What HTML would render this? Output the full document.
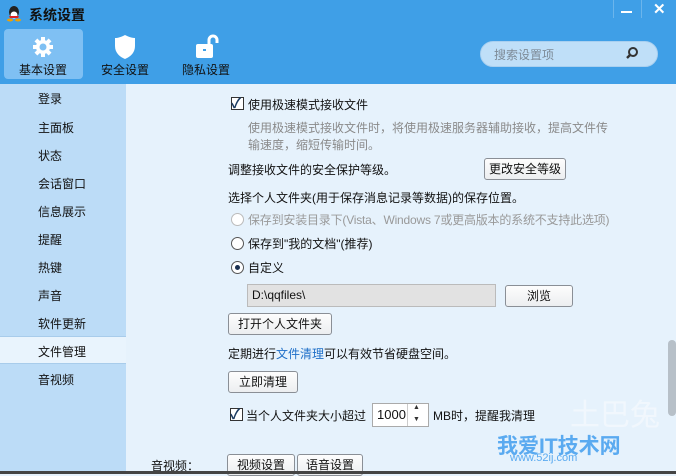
<!DOCTYPE html><html><head><meta charset="utf-8"><style>
*{margin:0;padding:0;box-sizing:border-box}
body{width:676px;height:474px;overflow:hidden;position:relative;background:#e6f2fc;font-family:"Liberation Sans","Noto Sans CJK SC",sans-serif;font-size:12px;color:#111}
.a{position:absolute;white-space:nowrap}
.hdr{left:0;top:0;width:676px;height:84px;background:#3f9fe7}
.side{left:0;top:84px;width:126px;height:390px;background:#bcdcf7}
.si{left:38px}
.btn{position:absolute;border:1px solid #8a8f96;border-radius:3px;background:linear-gradient(#fdfdfd,#eceef0);text-align:center;line-height:20px;height:22px}
.cb{position:absolute;width:13px;height:13px;border:1px solid #333;background:#fff}
.rd{position:absolute;width:13px;height:13px;border:1px solid #555;border-radius:50%;background:#fff}
.g{color:#8a8a8a}
</style></head><body>
<div class="a hdr"></div>
<svg class="a" style="left:6px;top:5px" width="16" height="17" viewBox="0 0 16 17"><ellipse cx="8" cy="7" rx="5" ry="6" fill="#222"/><ellipse cx="8" cy="10" rx="3.5" ry="3.5" fill="#fff"/><path d="M3 11h10l-1 2H4z" fill="#e02020"/><ellipse cx="4" cy="15" rx="3" ry="1.5" fill="#f0a000"/><ellipse cx="12" cy="15" rx="3" ry="1.5" fill="#f0a000"/></svg>
<div class="a" style="left:29px;top:5px;font-size:14px;font-weight:bold;color:#111">系统设置</div>
<div class="a" style="left:613px;top:0;width:1px;height:18px;background:#6bb5ec"></div>
<div class="a" style="left:641px;top:0;width:1px;height:18px;background:#6bb5ec"></div>
<div class="a" style="left:621px;top:11px;width:11px;height:2px;background:#fff"></div>
<div class="a" style="left:653px;top:0px;color:#fff;font-size:15px;font-weight:bold">✕</div>
<div class="a" style="left:4px;top:29px;width:79px;height:50px;background:#7fc0f3;border-radius:4px"></div>
<svg class="a" style="left:32px;top:36px" width="22" height="22" viewBox="0 0 22 22"><g fill="#fff"><circle cx="11" cy="11" r="7"/><rect x="9" y="1" width="4" height="20"/><rect x="1" y="9" width="20" height="4"/><rect x="9" y="1" width="4" height="20" transform="rotate(45 11 11)"/><rect x="9" y="1" width="4" height="20" transform="rotate(-45 11 11)"/></g><circle cx="11" cy="11" r="3.5" fill="#7fc0f3"/></svg>
<svg class="a" style="left:114px;top:34px" width="22" height="26" viewBox="0 0 22 26"><path d="M11 1C7 3 4 4 1 4v8c0 7 5 11 10 13 5-2 10-6 10-13V4c-3 0-6-1-10-3z" fill="#fff"/></svg>
<svg class="a" style="left:195px;top:34px" width="26" height="26" viewBox="0 0 26 26"><rect x="1" y="10" width="17" height="14" rx="2" fill="#fff"/><path d="M14 10V6a4 4 0 0 1 8 0v3" stroke="#fff" stroke-width="3" fill="none"/><rect x="8" y="15" width="3" height="2" fill="#3f9fe7"/></svg>
<div class="a" style="left:19px;top:61px;color:#111">基本设置</div>
<div class="a" style="left:101px;top:61px;color:#111">安全设置</div>
<div class="a" style="left:182px;top:61px;color:#111">隐私设置</div>
<div class="a" style="left:480px;top:41px;width:178px;height:26px;border-radius:13px;background:#bfdff8;border:1px solid #a9d0f0"></div>
<div class="a" style="left:494px;top:46px;color:#7d8a96">搜索设置项</div>
<svg class="a" style="left:625px;top:46px" width="14" height="14" viewBox="0 0 14 14"><circle cx="8" cy="6" r="4" stroke="#333" stroke-width="2" fill="none"/><path d="M5 9l-3 3" stroke="#333" stroke-width="2.4"/></svg>
<div class="a side"></div>
<div class="a" style="left:0;top:336px;width:126px;height:28px;background:#e9f4fd;border-top:1px solid #a8cceb;border-bottom:1px solid #a8cceb"></div>
<div class="a si" style="top:90px">登录</div>
<div class="a si" style="top:119px">主面板</div>
<div class="a si" style="top:147px">状态</div>
<div class="a si" style="top:175px">会话窗口</div>
<div class="a si" style="top:203px">信息展示</div>
<div class="a si" style="top:231px">提醒</div>
<div class="a si" style="top:259px">热键</div>
<div class="a si" style="top:287px">声音</div>
<div class="a si" style="top:315px">软件更新</div>
<div class="a si" style="top:343px">文件管理</div>
<div class="a si" style="top:371px">音视频</div>
<div class="cb" style="left:231px;top:97px"></div><div class="a" style="left:231px;top:93px;font-size:14px;color:#1a3a60;font-weight:bold">✓</div>
<div class="a" style="left:248px;top:96px">使用极速模式接收文件</div>
<div class="a g" style="left:248px;top:119px">使用极速模式接收文件时，将使用极速服务器辅助接收，提高文件传</div>
<div class="a g" style="left:248px;top:136px">输速度，缩短传输时间。</div>
<div class="a" style="left:228px;top:161px">调整接收文件的安全保护等级。</div>
<div class="btn" style="left:484px;top:158px;width:82px">更改安全等级</div>
<div class="a" style="left:228px;top:189px">选择个人文件夹(用于保存消息记录等数据)的保存位置。</div>
<div class="rd" style="left:231px;top:213px;border-color:#bbb"></div>
<div class="a g" style="left:248px;top:211px;color:#999;letter-spacing:-0.2px">保存到安装目录下(Vista、Windows 7或更高版本的系统不支持此选项)</div>
<div class="rd" style="left:231px;top:237px"></div>
<div class="a" style="left:248px;top:235px">保存到"我的文档"(推荐)</div>
<div class="rd" style="left:231px;top:261px"></div><div class="a" style="left:235px;top:265px;width:5px;height:5px;border-radius:50%;background:#1a3050"></div>
<div class="a" style="left:248px;top:259px">自定义</div>
<div class="a" style="left:247px;top:284px;width:249px;height:23px;background:#e2e2e2;border:1px solid #bbb;padding:3px 4px">D:\qqfiles\</div>
<div class="btn" style="left:505px;top:285px;width:68px">浏览</div>
<div class="btn" style="left:228px;top:313px;width:104px">打开个人文件夹</div>
<div class="a" style="left:228px;top:345px">定期进行<span style="color:#1e6fc8">文件清理</span>可以有效节省硬盘空间。</div>
<div class="btn" style="left:228px;top:371px;width:70px">立即清理</div>
<div class="cb" style="left:230px;top:408px"></div><div class="a" style="left:230px;top:404px;font-size:14px;color:#1a3a60;font-weight:bold">✓</div>
<div class="a" style="left:246px;top:407px">当个人文件夹大小超过</div>
<div class="a" style="left:372px;top:403px;width:57px;height:24px;background:#fff;border:1px solid #aaa;padding:3px 4px;font-size:13px">1000</div>
<div class="a" style="left:407px;top:404px;width:1px;height:22px;background:#ccc"></div>
<div class="a" style="left:413px;top:404px;font-size:7px;color:#333">▲</div>
<div class="a" style="left:413px;top:416px;font-size:7px;color:#333">▼</div>
<div class="a" style="left:433px;top:407px">MB时，提醒我清理</div>
<div class="a" style="left:151px;top:457px">音视频：</div>
<div class="btn" style="left:227px;top:454px;width:68px">视频设置</div>
<div class="btn" style="left:297px;top:454px;width:66px">语音设置</div>
<div class="a" style="left:570px;top:390px;font-size:30px;color:#fff;opacity:.45">土巴兔</div>
<div class="a" style="left:497px;top:430px;font-size:21px;font-weight:bold;color:#5aaaf0">我爱IT技术网</div>
<div class="a" style="left:510px;top:452px;font-size:11px;color:#5aaaf0">www.52ij.com</div>
<div class="a" style="left:668px;top:340px;width:8px;height:76px;background:#b7c0c8;border-radius:4px"></div>
<div class="a" style="left:0;top:471px;width:676px;height:3px;background:#444"></div>
</body></html>
